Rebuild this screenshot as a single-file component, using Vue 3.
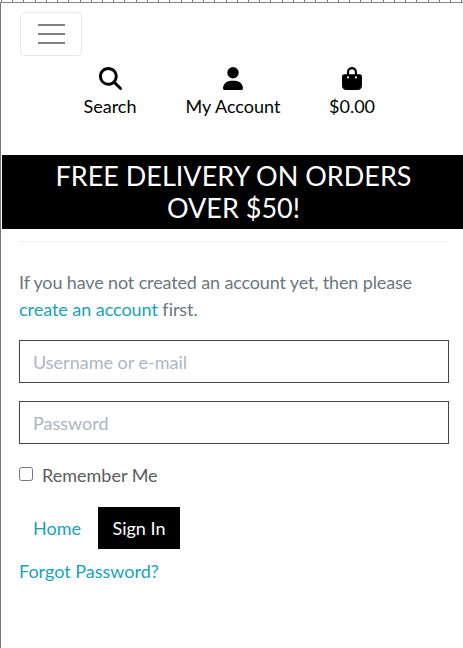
<script setup>
import { ref } from 'vue'

const username = ref('')
const password = ref('')
const remember = ref(false)
const ticks = Array.from({ length: 42 }, (_, i) => Math.round(0.9 + i * 11.23))
</script>

<template>
  <div class="page">
    <svg class="ruler" width="463" height="3" shape-rendering="crispEdges">
      <rect v-for="x in ticks" :key="x" :x="x" y="0" width="1" height="2" fill="#777" />
      <rect x="0" y="2" width="463" height="1" fill="#858585" />
    </svg>
    <div class="body">
      <header>
        <button class="toggler" aria-label="Menu">
          <svg width="27" height="28" viewBox="0 0 27 28">
            <path d="M0 5h27M0 14h27M0 23h27" stroke="#808080" stroke-width="2" />
          </svg>
        </button>
        <nav class="links">
          <a class="link search">
            <svg width="23" height="23" viewBox="0 0 512 512"><path d="M416 208c0 45.900-14.900 88.300-40 122.700L502.600 457.400c12.500 12.500 12.500 32.800 0 45.300s-32.800 12.500-45.300 0L330.700 376c-34.400 25.200-76.800 40-122.700 40C93.100 416 0 322.900 0 208S93.100 0 208 0S416 93.100 416 208zM208 352a144 144 0 1 0 0-288 144 144 0 1 0 0 288z" /></svg>
            <span>Search</span>
          </a>
          <a class="link account">
            <svg width="20" height="23" viewBox="0 0 448 512"><path d="M224 256A128 128 0 1 0 224 0a128 128 0 1 0 0 256zm-45.700 48C79.800 304 0 383.800 0 482.300C0 498.700 13.300 512 29.700 512H418.300c16.400 0 29.700-13.300 29.700-29.700C448 383.800 368.200 304 269.700 304H178.300z" /></svg>
            <span>My Account</span>
          </a>
          <a class="link cart">
            <svg width="20" height="23" viewBox="0 0 448 512"><path d="M160 112c0-35.300 28.700-64 64-64s64 28.700 64 64v48H160V112zm-48 48H48c-26.500 0-48 21.500-48 48V416c0 53 43 96 96 96H352c53 0 96-43 96-96V208c0-26.500-21.500-48-48-48H336V112C336 50.100 285.900 0 224 0S112 50.100 112 112v48zm24 48a24 24 0 1 1 0 48 24 24 0 1 1 0-48zm152 24a24 24 0 1 1 48 0 24 24 0 1 1-48 0z" /></svg>
            <span>$0.00</span>
          </a>
        </nav>
      </header>
      <h3 class="banner">FREE DELIVERY ON ORDERS OVER $50!</h3>
      <main>
        <hr>
        <p><span class="lead">If you have not created an account yet, then please</span> <a>create an account</a> first.</p>
        <form @submit.prevent>
          <input v-model="username" class="field" type="text" placeholder="Username or e-mail">
          <input v-model="password" class="field" type="password" placeholder="Password">
          <label class="remember"><input v-model="remember" type="checkbox"><span>Remember Me</span></label>
          <div class="actions">
            <a class="home">Home</a>
            <button class="signin">Sign In</button>
          </div>
          <a class="forgot">Forgot Password?</a>
        </form>
      </main>
    </div>
  </div>
</template>

<style>
body { background: #fff; overflow: hidden; }
</style>

<style scoped>
.page {
  height: 648px;
  display: flex;
  flex-direction: column;
  font: 18px/27px Lato, sans-serif;
  color: #6c757d;
}
.page * { box-sizing: border-box; }
.ruler { display: block; flex: none; }
.body { flex: 1; border-left: 1px solid #777; padding-left: 1px; }
header { height: 152px; padding-top: 9px; }
.toggler {
  display: flex;
  align-items: flex-start;
  justify-content: center;
  width: 62px;
  height: 44px;
  margin-left: 18px;
  padding: 7px 0 0;
  background: #fff;
  border: 1px solid #e8e8e8;
  border-radius: 4px;
}
.links { display: flex; padding: 11px 0 0 81px; color: #000; }
.link { display: flex; flex-direction: column; align-items: center; white-space: nowrap; }
.link svg { display: block; margin-bottom: 3px; fill: #000; }
.link span { height: 27px; }
.search { width: 54px; }
.account { margin-left: 49px; width: 94px; }
.cart { margin-left: 49px; }
.banner {
  margin: 0;
  height: 74px;
  padding: 5px 15px 5px 17px;
  background: #000;
  color: #fff;
  font-size: 27px;
  font-weight: 400;
  line-height: 32px;
  text-align: center;
}
main { padding: 12px 14px 0 17px; }
hr { height: 1px; margin: 0; border: 0; background: #eee; }
p { margin: 27px 0 17px; letter-spacing: -0.05px; }
.lead { letter-spacing: -0.14px; }
a { color: #17a2b8; }
.links a { color: #000; }
form { display: flex; flex-direction: column; align-items: flex-start; }
.field {
  width: 100%;
  height: 43px;
  margin: 0 0 18px;
  padding: 0 13px;
  border: 1px solid #444;
  border-radius: 0;
  background: #fff;
  color: #495057;
  font: 18px/27px Lato, sans-serif;
  outline: 0;
}
.field::placeholder { color: #adb5c2; opacity: 1; }
.remember { display: flex; height: 27px; color: #5c5c5c; }
.remember input { width: 14px; height: 14px; margin: 5px 9px 0 0; }
.actions { display: flex; margin-top: 18px; height: 42px; }
.home { padding: 8px 17px 0 14px; }
.signin {
  width: 82px;
  height: 42px;
  padding: 1px 0 0;
  border: 0;
  background: #000;
  color: #fff;
  font: 18px/27px Lato, sans-serif;
}
.forgot { margin-top: 9px; }
</style>
